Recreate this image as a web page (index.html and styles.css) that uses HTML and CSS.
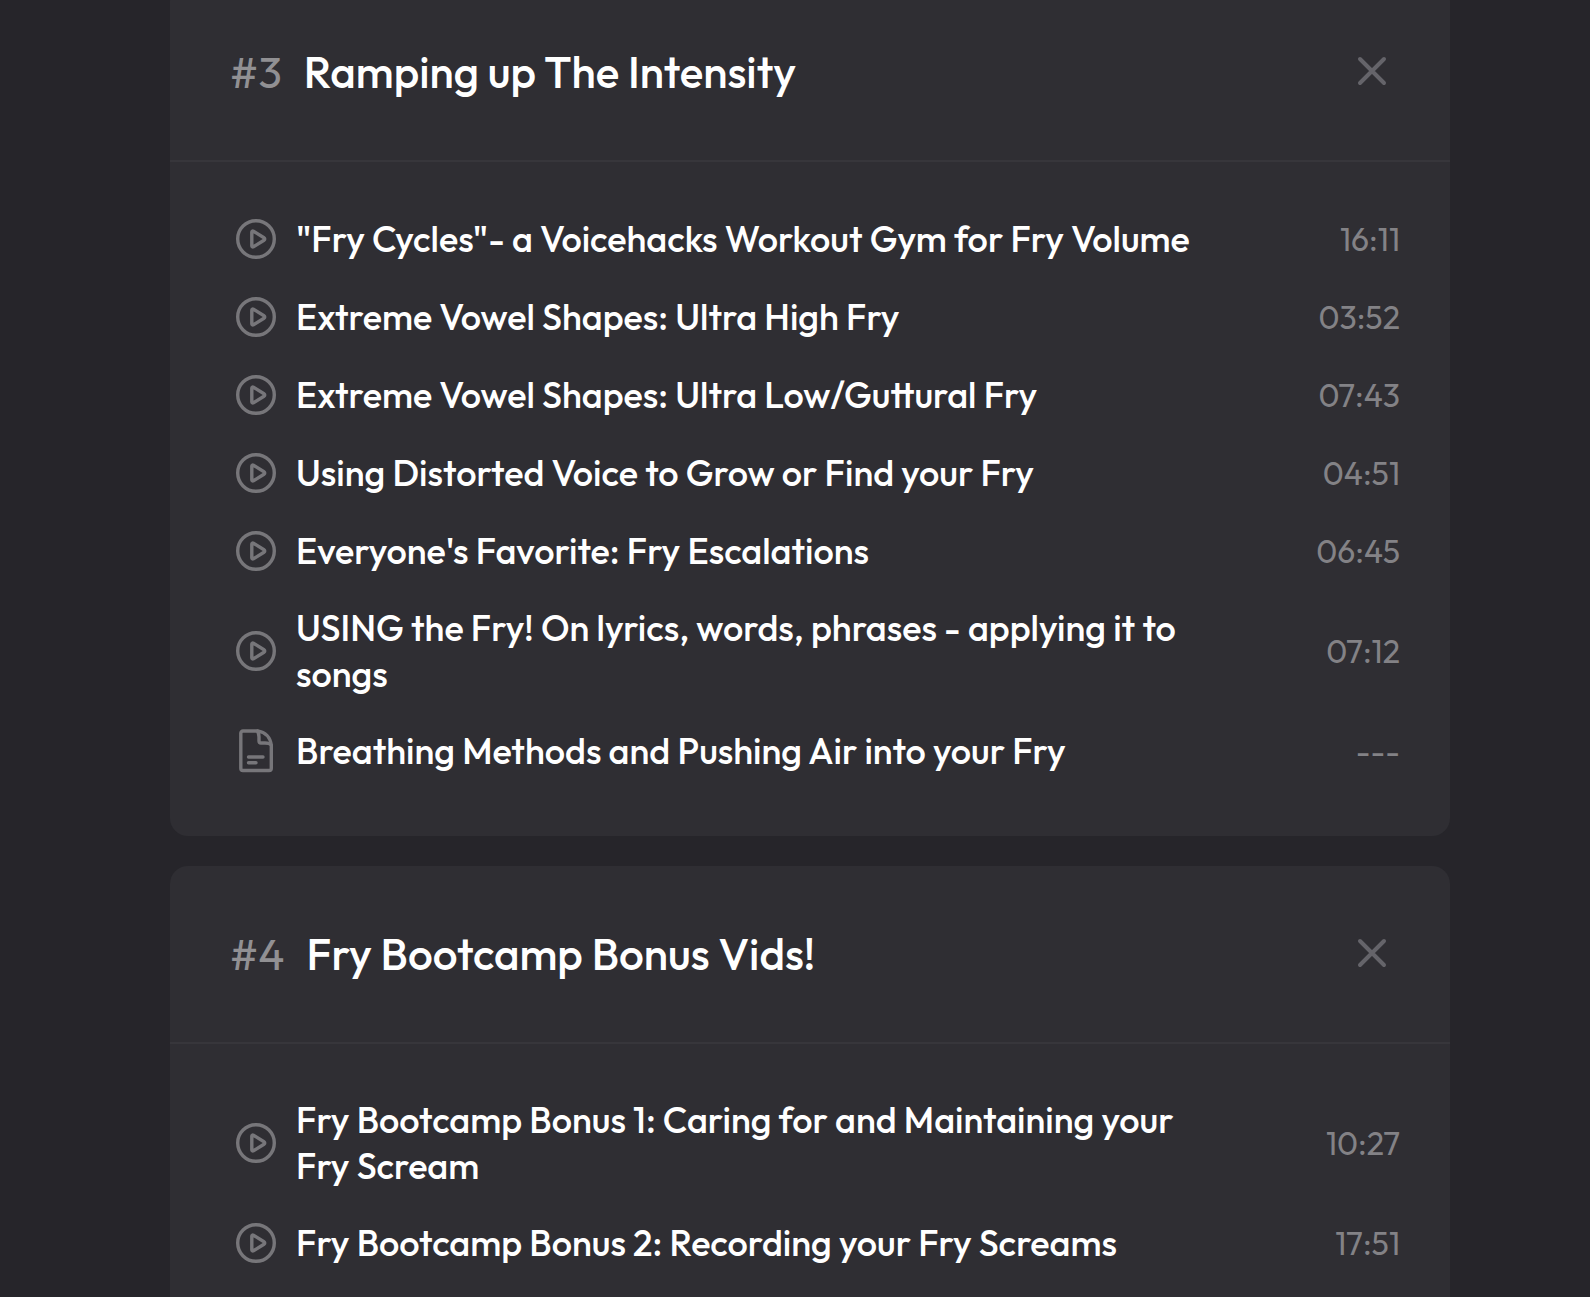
FILE: index.html
```html
<!DOCTYPE html>
<html lang="en">
<head>
    <meta charset="UTF-8">
    <meta name="viewport" content="width=device-width, initial-scale=1.0">
    <title>Fry Bootcamp</title>
    <link rel="stylesheet" href="styles.css">
</head>
<body>
    <!-- shared icons -->
    <svg class="sprite" aria-hidden="true">
        <symbol id="play" viewBox="0 0 48 48">
            <circle cx="24" cy="24" r="18.3"/>
            <path d="M19.8 17.2v13.6c0 1 .8 1.4 1.6 1l10.600-6.500c1-.6 1-2 0-2.600L21.400 16.200c-.8-.4-1.600 0-1.600 1z"/>
        </symbol>
        <symbol id="file" viewBox="0 0 48 48">
            <path d="M11 4h14.500c8 1 13 6.500 13.800 14.500v22.800a2.200 2.200 0 0 1-2.200 2.200H11a2.200 2.200 0 0 1-2.200-2.200V6.200A2.200 2.200 0 0 1 11 4z"/>
            <path d="M25.500 4c1 2 1.500 4 1.500 6v4a2 2 0 0 0 2 2h4c3 0 5 .5 6.300 2"/>
            <path d="M16.500 30h14.500M16.500 35.800h7.500"/>
        </symbol>
        <symbol id="close" viewBox="0 0 56 56">
            <path d="M16 15l24 24M40 15L16 39"/>
        </symbol>
    </svg>

    <main class="course">
        <section class="card">
            <header class="card-head">
                <span class="number">#3</span>
                <h2>Ramping up The Intensity</h2>
                <button class="close" type="button" aria-label="Close section 3"><svg><use href="#close"/></svg></button>
            </header>
            <ul class="lessons">
                <li>
                    <svg class="icon"><use href="#play"/></svg>
                    <span class="name">"Fry Cycles"- a Voicehacks Workout Gym for Fry Volume</span>
                    <span class="time">16:11</span>
                </li>
                <li>
                    <svg class="icon"><use href="#play"/></svg>
                    <span class="name">Extreme Vowel Shapes: Ultra High Fry</span>
                    <span class="time">03:52</span>
                </li>
                <li>
                    <svg class="icon"><use href="#play"/></svg>
                    <span class="name">Extreme Vowel Shapes: Ultra Low/Guttural Fry</span>
                    <span class="time">07:43</span>
                </li>
                <li>
                    <svg class="icon"><use href="#play"/></svg>
                    <span class="name">Using Distorted Voice to Grow or Find your Fry</span>
                    <span class="time">04:51</span>
                </li>
                <li>
                    <svg class="icon"><use href="#play"/></svg>
                    <span class="name">Everyone's Favorite: Fry Escalations</span>
                    <span class="time">06:45</span>
                </li>
                <li>
                    <svg class="icon"><use href="#play"/></svg>
                    <span class="name">USING the Fry! On lyrics, words, phrases - applying it to songs</span>
                    <span class="time">07:12</span>
                </li>
                <li>
                    <svg class="icon"><use href="#file"/></svg>
                    <span class="name">Breathing Methods and Pushing Air into your Fry</span>
                    <span class="time">---</span>
                </li>
            </ul>
        </section>

        <section class="card">
            <header class="card-head">
                <span class="number">#4</span>
                <h2>Fry Bootcamp Bonus Vids!</h2>
                <button class="close" type="button" aria-label="Close section 4"><svg><use href="#close"/></svg></button>
            </header>
            <ul class="lessons">
                <li>
                    <svg class="icon"><use href="#play"/></svg>
                    <span class="name">Fry Bootcamp Bonus 1: Caring for and Maintaining your Fry Scream</span>
                    <span class="time">10:27</span>
                </li>
                <li>
                    <svg class="icon"><use href="#play"/></svg>
                    <span class="name">Fry Bootcamp Bonus 2: Recording your Fry Screams</span>
                    <span class="time">17:51</span>
                </li>
            </ul>
        </section>
    </main>
</body>
</html>
```
FILE: styles.css
```css
*{
    box-sizing: border-box;
    margin: 0;
    padding: 0;
}
body{
    background-color: #26252a;
    color: #fff;
    font-family: Outfit, Lato, "Liberation Sans", sans-serif;
    overflow-x: hidden;
}
.sprite{
    display: none;
}
.course{
    display: flex;
    flex-direction: column;
    gap: 30px;
    margin: -16px 140px 0 170px;
}
.card{
    background-color: #2f2e33;
    border-radius: 18px;
}
.card-head{
    display: flex;
    align-items: center;
    padding: 60px 50px 60px 60px;
    border-bottom: 2px solid #37363b;
}
.number{
    color: #919093;
    font-size: 44px;
    line-height: 56px;
    margin-right: 22px;
}
h2{
    flex: 1;
    font-size: 44px;
    font-weight: 500;
    line-height: 56px;
}
.close{
    width: 56px;
    height: 56px;
    background: none;
    border: none;
    cursor: pointer;
}
.close svg{
    display: block;
    width: 56px;
    height: 56px;
    fill: none;
    stroke: #65646a;
    stroke-width: 4;
    stroke-linecap: round;
}
.lessons{
    list-style: none;
    padding: 38px 50px 46px 62px;
}
.lessons li{
    display: flex;
    align-items: center;
    padding: 15px 0;
}
.icon{
    flex: none;
    width: 48px;
    height: 48px;
    margin-right: 16px;
    fill: none;
    stroke: #77767a;
    stroke-width: 3.4;
    stroke-linecap: round;
    stroke-linejoin: round;
}
.name{
    flex: 1;
    font-size: 36px;
    font-weight: 500;
    line-height: 46px;
}
.time{
    width: 170px;
    color: #838286;
    font-size: 32px;
    line-height: 46px;
    text-align: right;
}
```
